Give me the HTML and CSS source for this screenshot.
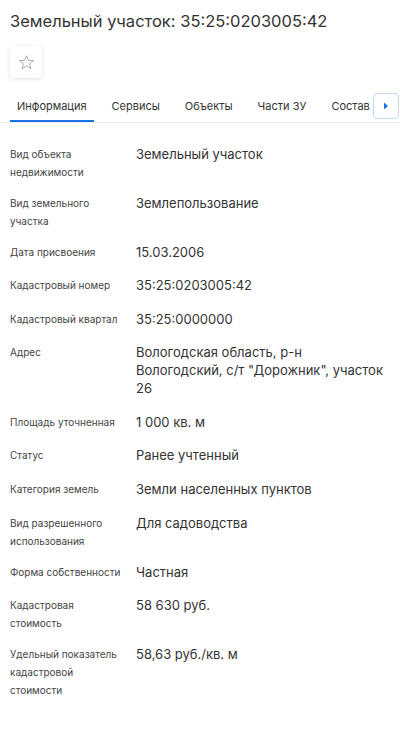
FILE: index.html
```html
<!DOCTYPE html>
<html lang="ru">
<head>
<meta charset="utf-8">
<title>Земельный участок</title>
<link rel="stylesheet" href="styles.css">
</head>
<body>
<div class="page">
  <h1 class="title">Земельный участок: 35:25:0203005:42</h1>
  <button class="fav" type="button" aria-label="В избранное">
    <svg width="17" height="17" viewBox="0 0 24 24"><polygon points="12,2.5 14.8,9 21.8,9.3 16.4,13.8 18.2,20.7 12,16.8 5.8,20.7 7.6,13.8 2.2,9.3 9.2,9" fill="none" stroke="#a8a8a8" stroke-width="1.4" stroke-linejoin="round"/></svg>
  </button>
  <div class="tabs-wrap">
    <nav class="tabs">
      <span class="tab active">Информация</span>
      <span class="tab">Сервисы</span>
      <span class="tab">Объекты</span>
      <span class="tab">Части ЗУ</span>
      <span class="tab">Состав</span>
    </nav>
    <button class="tabs-next" type="button" aria-label="Далее">
      <svg width="6" height="8" viewBox="0 0 6 8"><polygon points="1,0.5 5,4 1,7.5" fill="#1a73e8"/></svg>
    </button>
  </div>
  <div class="info">
    <div class="row"><div class="label">Вид объекта недвижимости</div><div class="value">Земельный участок</div></div>
    <div class="row"><div class="label">Вид земельного участка</div><div class="value">Землепользование</div></div>
    <div class="row"><div class="label">Дата присвоения</div><div class="value">15.03.2006</div></div>
    <div class="row"><div class="label">Кадастровый номер</div><div class="value">35:25:0203005:42</div></div>
    <div class="row"><div class="label">Кадастровый квартал</div><div class="value">35:25:0000000</div></div>
    <div class="row"><div class="label">Адрес</div><div class="value">Вологодская область, р-н Вологодский, с/т "Дорожник", участок 26</div></div>
    <div class="row"><div class="label">Площадь уточненная</div><div class="value">1 000 кв. м</div></div>
    <div class="row"><div class="label">Статус</div><div class="value">Ранее учтенный</div></div>
    <div class="row"><div class="label">Категория земель</div><div class="value">Земли населенных пунктов</div></div>
    <div class="row"><div class="label">Вид разрешенного использования</div><div class="value">Для садоводства</div></div>
    <div class="row"><div class="label">Форма собственности</div><div class="value">Частная</div></div>
    <div class="row"><div class="label">Кадастровая стоимость</div><div class="value">58 630 руб.</div></div>
    <div class="row"><div class="label">Удельный показатель кадастровой стоимости</div><div class="value">58,63 руб./кв. м</div></div>
  </div>
</div>
</body>
</html>
```

FILE: styles.css
```css
* { box-sizing: border-box; }
html, body { margin: 0; padding: 0; background: #fff; }
body {
  font-family: Inter, "Noto Sans", "DejaVu Sans", sans-serif;
  color: #333;
  width: 400px;
  overflow-x: hidden;
}
.page { padding: 0 10px; }
.title {
  margin: 10px 0 0;
  font-size: 16.5px;
  line-height: 23px;
  font-weight: 400;
  color: #333;
}
.fav {
  margin-top: 13px;
  width: 32px;
  height: 32px;
  padding: 0;
  border: none;
  border-radius: 4px;
  background: #fff;
  box-shadow: 0 1px 4px rgba(0,0,0,0.13);
  display: flex;
  align-items: center;
  justify-content: center;
}
.tabs-wrap {
  position: relative;
  margin: 12px -10px 0;
  padding: 0 10px;
  border-bottom: 1px solid #ececec;
}
.tabs {
  display: flex;
  overflow: hidden;
  white-space: nowrap;
}
.tab {
  flex: none;
  padding: 8px 7px 6px;
  margin-right: 11px;
  font-size: 11px;
  line-height: 16px;
  color: #333;
  border-bottom: 2px solid transparent;
}
.tab.active { border-bottom-color: #1a73e8; }
.tabs-next {
  position: absolute;
  right: 1px;
  top: 3px;
  width: 26px;
  height: 26px;
  padding: 0;
  border: 1px solid #c4d8f3;
  border-radius: 4px;
  background: #fff;
  display: flex;
  align-items: center;
  justify-content: center;
}
.info { padding-top: 15px; }
.row {
  display: grid;
  grid-template-columns: 114px 254px;
  column-gap: 12px;
  padding: 6.5px 0;
}
.label {
  font-size: 10px;
  line-height: 18px;
  color: #444;
}
.value {
  font-size: 13px;
  line-height: 18px;
  padding-bottom: 2.6px;
  color: #333;
}
```
